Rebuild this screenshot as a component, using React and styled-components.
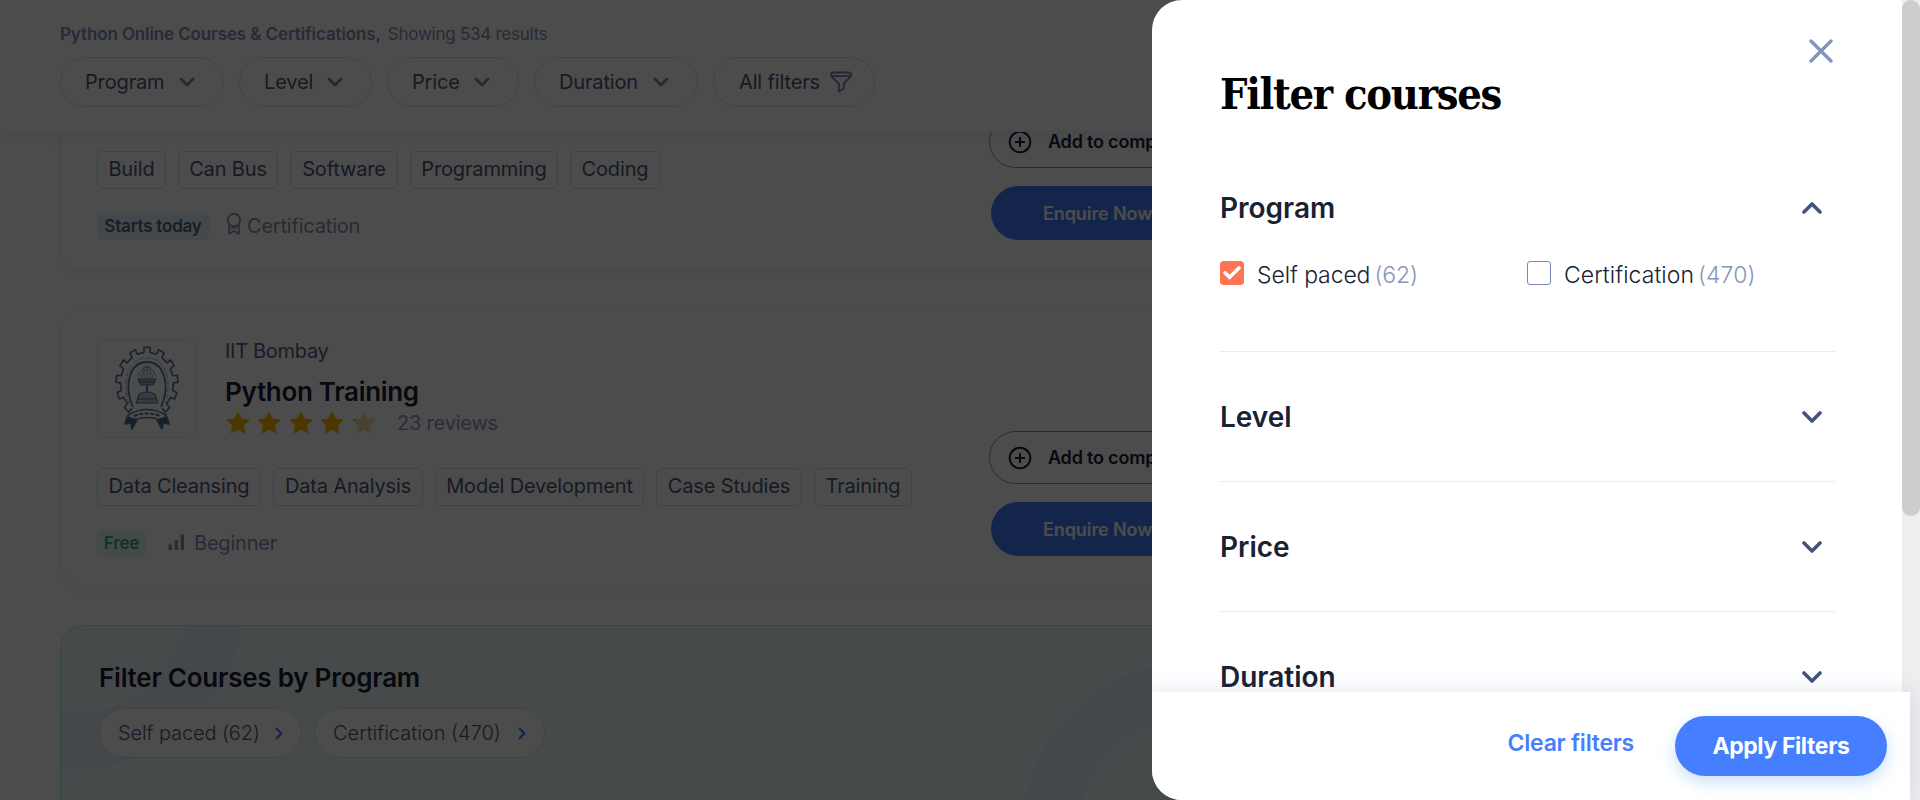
import React from "react";
import styled, { createGlobalStyle, css } from "styled-components";

const Global = createGlobalStyle`
  *, *::before, *::after { box-sizing: border-box; }
  body { margin: 0; background: #fff; overflow: hidden; }
  h1, h2, h3, p { margin: 0; }
  button { font: inherit; background: none; border: 0; padding: 0; cursor: pointer; }
  svg { display: block; flex: none; }
`;

const Screen = styled.div`
  position: relative;
  width: 1920px;
  height: 800px;
  overflow: hidden;
  font-family: Inter, "Liberation Sans", sans-serif;
  color: #516182;
`;

/* ---------- results page ---------- */

const Toolbar = styled.header`
  position: relative;
  z-index: 1;
  height: 132px;
  padding: 24px 60px 0;
  background: #fff;
  border-bottom: 1px solid #f4f6fa;
  box-shadow: 0 6px 14px rgba(70, 100, 170, 0.08);
`;

const Summary = styled.p`
  height: 33px;
  font-size: 17px;
  line-height: 20px;
  color: #8191b4;
  letter-spacing: -0.25px;
  strong {
    margin-right: 7px;
    font-weight: 600;
    letter-spacing: -0.12px;
  }
`;

const PillRow = styled.div`
  display: flex;
  gap: ${(p) => p.$gap};
`;

const Pill = styled.button`
  display: flex;
  align-items: center;
  justify-content: space-between;
  width: ${(p) => p.$width}px;
  height: 50px;
  padding: 0 ${(p) => p.$end}px 0 ${(p) => p.$start}px;
  border: 1px solid #d8e2e8;
  border-radius: 25px;
  background: #fff;
  font-size: 20px;
  font-weight: ${(p) => p.$weight || 400};
  letter-spacing: ${(p) => p.$spacing || "-0.15px"};
  color: #4c5979;
  white-space: nowrap;
`;

const Results = styled.main`
  padding: 0 60px;
`;

const Card = styled.article`
  display: grid;
  grid-template-columns: 892px 1fr;
  height: ${(p) => p.$height}px;
  margin-top: ${(p) => p.$top}px;
  padding: ${(p) => p.$pad}px 36px 0;
  border: 1px solid #e9eef2;
  border-radius: 24px;
  box-shadow: 0 6px 10px rgba(70, 100, 170, 0.05);
`;

const CardMain = styled.div`
  padding-top: ${(p) => p.$top || 0}px;
`;

const CourseHead = styled.div`
  display: flex;
  height: 129px;
`;

const LogoBox = styled.div`
  display: flex;
  align-items: center;
  justify-content: center;
  width: 99px;
  height: 99px;
  margin-right: 29px;
  border: 1px solid #e8ebef;
  border-radius: 9px;
`;

const School = styled.p`
  font-size: 20px;
  line-height: 25px;
  color: #516182;
  letter-spacing: -0.3px;
`;

const CourseTitle = styled.h2`
  margin-top: 12px;
  font-size: 26px;
  font-weight: 600;
  line-height: 32px;
  letter-spacing: -0.3px;
  color: #192133;
`;

const Rating = styled.div`
  display: flex;
  align-items: center;
  height: 28px;
  margin-top: 1px;
  font-size: 20px;
  color: #8c9abb;
`;

const Reviews = styled.span`
  margin-left: 17px;
  font-weight: 400;
  letter-spacing: -0.2px;
`;

const Tags = styled.div`
  display: flex;
  gap: 12px;
`;

const Tag = styled.span`
  width: ${(p) => p.$width}px;
  height: 38px;
  border: 1px solid #d5dce3;
  border-radius: 5px;
  font-size: 20px;
  line-height: 35px;
  letter-spacing: -0.15px;
  text-align: center;
  white-space: nowrap;
  color: #4c5979;
`;

const Meta = styled.div`
  display: flex;
  align-items: center;
  height: 27px;
  margin-top: 24px;
  font-size: 20px;
  font-weight: 400;
  line-height: 26px;
  color: #8191b4;
`;

const Badge = styled.span`
  width: ${(p) => p.$width}px;
  height: 27px;
  margin-right: ${(p) => p.$gap}px;
  border-radius: 5px;
  font-size: 17px;
  font-weight: 600;
  letter-spacing: -0.2px;
  line-height: 26px;
  text-align: center;
  white-space: nowrap;
  ${(p) =>
    p.$green
      ? css`
          color: #1cb687;
          background: #ebf4f4;
        `
      : css`
          color: #516585;
          background: #e6f0f7;
        `}
`;

const MetaText = styled.span`
  height: 27px;
  margin-left: ${(p) => p.$left}px;
  letter-spacing: -0.2px;
`;

const Actions = styled.div`
  display: flex;
  flex-direction: column;
  gap: 18px;
  padding-top: ${(p) => p.$top}px;
`;

const CompareButton = styled.button`
  display: flex;
  align-items: center;
  gap: 16px;
  width: 220px;
  height: 53px;
  padding-left: 18px;
  border: 1px solid #8191b4;
  border-radius: 27px;
  font-size: 18px;
  font-weight: 600;
  letter-spacing: -0.2px;
  color: #192133;
  white-space: nowrap;
`;

const EnquireButton = styled.button`
  width: 216px;
  height: 54px;
  margin-left: 2px;
  padding-left: 52px;
  border-radius: 27px;
  background: #457eff;
  color: #fff;
  font-size: 18px;
  font-weight: 600;
  letter-spacing: -0.1px;
  text-align: left;
`;

const ProgramPanel = styled.section`
  position: relative;
  height: 200px;
  margin-top: 38px;
  padding: 36px 38px;
  border: 1px solid #bde8ee;
  border-radius: 24px;
  background: #ecf9f8;
  overflow: hidden;
`;

const PanelRings = styled.svg`
  position: absolute;
  inset: 0;
`;

const PanelBody = styled.div`
  position: relative;
`;

const PanelTitle = styled.h2`
  height: 46px;
  font-size: 26px;
  font-weight: 600;
  line-height: 32px;
  letter-spacing: -0.23px;
  color: #192133;
`;

const Overlay = styled.div`
  position: absolute;
  z-index: 2;
  inset: 0;
  background: rgba(0, 0, 0, 0.7);
`;

/* ---------- drawer ---------- */

const Drawer = styled.aside`
  position: absolute;
  z-index: 3;
  top: 0;
  right: 0;
  display: flex;
  flex-direction: column;
  width: 768px;
  height: 800px;
  border-radius: 30px 0 0 30px;
  background: #fff;
  overflow: hidden;
`;

const DrawerBody = styled.div`
  display: flex;
  height: 692px;
  flex: none;
`;

const DrawerContent = styled.div`
  width: 750px;
  padding: 0 67px 0 68px;
`;

const DrawerHead = styled.div`
  display: flex;
  justify-content: space-between;
  height: 143px;
  padding-top: 39px;
`;

const DrawerTitle = styled.h1`
  padding-top: 29px;
  font-family: "Roboto Slab", "DejaVu Serif Condensed", "DejaVu Serif", serif;
  font-stretch: condensed;
  font-size: 43px;
  font-weight: 700;
  line-height: 52px;
  letter-spacing: -1.3px;
  color: #000;
  white-space: nowrap;
`;

const Close = styled.button`
  align-self: flex-start;
  margin-right: 2px;
`;

const Group = styled.section`
  height: ${(p) => (p.$open ? 209 : 130)}px;
  border-bottom: 1px solid #e8eef0;
`;

const GroupHead = styled.div`
  display: flex;
  align-items: center;
  justify-content: space-between;
  height: 130px;
  padding-right: 13px;
  h3 {
    font-size: 28px;
    font-weight: 600;
    letter-spacing: 0;
    color: #192133;
  }
`;

const Options = styled.div`
  display: grid;
  grid-template-columns: 307px 1fr;
  margin-top: -12px;
`;

const Option = styled.label`
  display: flex;
  height: 32px;
  font-size: 23px;
  font-weight: 350;
  line-height: 28px;
  letter-spacing: ${(p) => p.$spacing || "-0.1px"};
  color: #192133;
  white-space: nowrap;
`;

const CheckBox = styled.span`
  display: flex;
  align-items: center;
  justify-content: center;
  width: 24px;
  height: 24px;
  margin-right: 13px;
  border: 1px solid ${(p) => (p.$checked ? "#ff7452" : "#7888b4")};
  border-radius: 3px;
  background: ${(p) => (p.$checked ? "#ff7452" : "#fff")};
`;

const Count = styled.span`
  margin-left: 4px;
  color: #8597bd;
`;

const ScrollTrack = styled.div`
  width: 18px;
  height: 800px;
  background: #eeeeee;
`;

const ScrollThumb = styled.div`
  height: 516px;
  border-radius: 9px;
  background: #cdcdcd;
`;

const DrawerFooter = styled.footer`
  position: relative;
  display: flex;
  align-items: flex-start;
  justify-content: flex-end;
  width: 758px;
  height: 108px;
  padding: 24px 23px 0 0;
  background: #fff;
  box-shadow: 0 0 20px rgba(70, 90, 190, 0.16);
`;

const ClearButton = styled.button`
  height: 54px;
  margin-right: 41px;
  color: #457eff;
  font-size: 23px;
  font-weight: 600;
  letter-spacing: -0.25px;
`;

const ApplyButton = styled.button`
  width: 212px;
  height: 60px;
  border-radius: 30px;
  background: #457eff;
  box-shadow: 0 6px 16px rgba(50, 130, 220, 0.26);
  color: #fff;
  font-size: 23px;
  font-weight: 700;
  letter-spacing: -0.4px;
`;

/* ---------- icons ---------- */

const Chevron = ({ w = 16, h = 10, stroke = 2.8, color = "#7686a8", up }) => (
  <svg width={w} height={h} viewBox={`0 0 ${w} ${h}`} fill="none">
    <path
      d={up ? `M2 ${h - 2} L${w / 2} 2 L${w - 2} ${h - 2}` : `M2 2 L${w / 2} ${h - 2} L${w - 2} 2`}
      stroke={color}
      strokeWidth={stroke}
      strokeLinecap="round"
      strokeLinejoin="round"
    />
  </svg>
);

const ChevronRight = () => (
  <svg width="8" height="13" viewBox="0 0 8 13" fill="none" stroke="#457eff" strokeWidth="2.3" strokeLinecap="round">
    <path d="M1.7 1.7 L6.3 6.5 L1.7 11.3" />
  </svg>
);

const Funnel = () => (
  <svg width="22" height="22" viewBox="0 0 22 21" fill="none" stroke="#7686a8" strokeWidth="1.9" strokeLinejoin="round">
    <path d="M3.5 1 H18.5 Q21 1 21 3.2 Q21 4.5 20 5.6 L13.8 12 V17 L8.8 20 V12 L2 5.6 Q1 4.5 1 3.2 Q1 1 3.5 1 Z" />
    <path d="M1.3 4.6 H20.7" />
  </svg>
);

const Ribbon = () => (
  <svg width="16" height="27" viewBox="0 0 16 27" fill="none" stroke="#8191b4" strokeWidth="1.8">
    <circle cx="8" cy="7" r="6.2" />
    <path d="M3.2 11.5 V20.7 L8 18 L12.8 20.7 V11.5 M5 14.5 H11" />
  </svg>
);

const Bars = () => (
  <svg width="17" height="19" viewBox="0 0 17 19" fill="#8191b4">
    <rect x="0.5" y="10.5" width="3.4" height="5.5" />
    <rect x="6.7" y="6" width="3.4" height="10" />
    <rect x="12.6" y="0.5" width="3.4" height="15.5" />
  </svg>
);

const PlusCircle = () => (
  <svg width="24" height="24" viewBox="0 0 24 24" fill="none" stroke="#192133" strokeWidth="2">
    <circle cx="12" cy="12" r="10.3" />
    <path d="M12 7 V17 M7 12 H17" />
  </svg>
);

const STAR = "M12 1 L15.3 7.9 L23 8.9 L17.4 14.2 L18.8 22 L12 18.3 L5.2 22 L6.6 14.2 L1 8.9 L8.7 7.9 Z";

const Stars = () => (
  <svg width="155" height="27" viewBox="0 0 155 27">
    <defs>
      <clipPath id="lastStarFill">
        <rect x="125" y="0" width="5" height="25" />
      </clipPath>
    </defs>
    {[1, 32, 64, 95].map((x) => (
      <path key={x} d={STAR} fill="#ffb800" stroke="#ffb800" strokeLinejoin="round" transform={`translate(${x} 1)`} />
    ))}
    <path d={STAR} fill="#f3dda8" stroke="#f3dda8" strokeLinejoin="round" transform="translate(127 1)" />
    <g clipPath="url(#lastStarFill)">
      <path d={STAR} fill="#ffb800" stroke="#ffb800" strokeLinejoin="round" transform="translate(127 1)" />
    </g>
  </svg>
);

/* cog outline: wide teeth with narrow valleys, open towards the ribbon */
const gearPath = (() => {
  const teeth = 11;
  const from = -Math.PI / 2 - 2.42;
  const step = (2.42 * 2) / (teeth - 1);
  const pts = [];
  for (let i = 0; i < teeth; i++) {
    const a = from + i * step;
    [
      [a - step * 0.24, 26.5],
      [a - step * 0.2, 31],
      [a + step * 0.2, 31],
      [a + step * 0.24, 26.5],
    ].forEach(([t, r]) => pts.push(`${(36 + Math.cos(t) * r).toFixed(1)} ${(40 + Math.sin(t) * r * 1.16).toFixed(1)}`));
  }
  return "M" + pts.join(" L");
})();

const Crest = () => (
  <svg width="72" height="92" viewBox="0 0 72 92" fill="none" stroke="#55739b" strokeWidth="1.6" strokeLinejoin="round">
    <path d={gearPath} />
    <path d="M22 64 C12 42 19 19 36 19 C53 19 60 42 50 64" strokeWidth="1.8" />
    <path d="M18 61 C10 36 18 15 36 15 C54 15 62 36 54 61" strokeWidth="0.8" stroke="#8aa0bd" strokeDasharray="5 2" />
    <path d="M27 33 Q36 15 45 33 M30 34 Q36 18 42 34 M33 35 V23 M36 36 V21 M39 35 V23" strokeWidth="1" stroke="#8aa0bd" />
    <path d="M27 36 H45 L42 42 H30 Z M29 39 H43" fill="#a0b2c9" strokeWidth="1.2" />
    <path d="M36 42 V51" strokeWidth="2" />
    <path d="M28 51 Q36 47 44 51 L47 60 H25 Z M26 56 H46" fill="#bcc8d8" strokeWidth="1" />
    <path d="M17 72 Q36 61 55 72 L53 79 Q36 70 19 79 Z" />
    <path d="M23 73 Q36 68 49 73" strokeWidth="2" strokeDasharray="4 1.5" />
    <path d="M16 74 L14 81 L20 80 L21 86 L26 77 Z M56 74 L58 81 L52 80 L51 86 L46 77 Z" fill="#456898" />
  </svg>
);

/* ---------- content ---------- */

const toolbarFilters = [
  { label: "Program", width: 164 },
  { label: "Level", width: 133 },
  { label: "Price", width: 132 },
  { label: "Duration", width: 164 },
];
const firstTags = [["Build", 69], ["Can Bus", 100], ["Software", 108], ["Programming", 148], ["Coding", 90]];
const secondTags = [
  ["Data Cleansing", 164],
  ["Data Analysis", 150],
  ["Model Development", 209],
  ["Case Studies", 146],
  ["Training", 98],
];

const TagList = ({ items }) => (
  <Tags>
    {items.map(([label, width]) => (
      <Tag key={label} $width={width}>{label}</Tag>
    ))}
  </Tags>
);

const CourseActions = ({ top }) => (
  <Actions $top={top}>
    <CompareButton><PlusCircle />Add to compare</CompareButton>
    <EnquireButton>Enquire Now</EnquireButton>
  </Actions>
);

export default function App() {
  return (
    <Screen>
      <Global />
      <Toolbar>
        <Summary><strong>Python Online Courses &amp; Certifications,</strong>Showing 534 results</Summary>
        <PillRow $gap="15px">
          {toolbarFilters.map((f) => (
            <Pill key={f.label} $width={f.width} $start={24} $end={28}>{f.label}<Chevron /></Pill>
          ))}
          <Pill $width={162} $start={25} $end={22}>All filters<Funnel /></Pill>
        </PillRow>
      </Toolbar>
      <Results>
        <Card $height={210} $top={-71} $pad={53}>
          <CardMain $top={36}>
            <TagList items={firstTags} />
            <Meta>
              <Badge $width={112} $gap={17}>Starts today</Badge>
              <Ribbon />
              <MetaText $left={5}>Certification</MetaText>
            </Meta>
          </CardMain>
          <CourseActions top={0} />
        </Card>
        <Card $height={279} $top={37} $pad={30}>
          <CardMain>
            <CourseHead>
              <LogoBox><Crest /></LogoBox>
              <div>
                <School>IIT Bombay</School>
                <CourseTitle>Python Training</CourseTitle>
                <Rating><Stars /><Reviews>23 reviews</Reviews></Rating>
              </div>
            </CourseHead>
            <TagList items={secondTags} />
            <Meta>
              <Badge $width={49} $gap={22} $green>Free</Badge>
              <Bars />
              <MetaText $left={9}>Beginner</MetaText>
            </Meta>
          </CardMain>
          <CourseActions top={92} />
        </Card>
        <ProgramPanel>
          <PanelRings width="1798" height="200" viewBox="0 0 1798 200" fill="none" stroke="#e3f2fb" strokeWidth="57">
            <circle cx="14" cy="-27" r="141.5" />
            <circle cx="1130" cy="206" r="141.5" />
          </PanelRings>
          <PanelBody>
            <PanelTitle>Filter Courses by Program</PanelTitle>
            <PillRow $gap="12px">
              <Pill $width={203} $start={18} $end={18} $weight={350} $spacing="-0.1px">Self paced (62)<ChevronRight /></Pill>
              <Pill $width={231} $start={18} $end={18} $weight={350} $spacing="0">Certification (470)<ChevronRight /></Pill>
            </PillRow>
          </PanelBody>
        </ProgramPanel>
      </Results>
      <Overlay />
      <Drawer>
        <DrawerBody>
          <DrawerContent>
            <DrawerHead>
              <DrawerTitle>Filter courses</DrawerTitle>
              <Close aria-label="Close">
                <svg width="24" height="24" viewBox="0 0 24 24" stroke="#8494ba" strokeWidth="3.4" strokeLinecap="round">
                  <path d="M2 2 L22 22 M22 2 L2 22" />
                </svg>
              </Close>
            </DrawerHead>
            <Group $open>
              <GroupHead><h3>Program</h3><Chevron up w={20} h={12} stroke={3.6} color="#43547c" /></GroupHead>
              <Options>
                <Option>
                  <CheckBox $checked>
                    <svg width="20" height="16" viewBox="0 0 20 16" fill="none" stroke="#fff" strokeWidth="3.6" strokeLinecap="round">
                      <path d="M3 7.8 L7.6 12.3 L17 3" />
                    </svg>
                  </CheckBox>
                  Self paced<Count>(62)</Count>
                </Option>
                <Option $spacing="0.05px"><CheckBox />Certification<Count>(470)</Count></Option>
              </Options>
            </Group>
            {["Level", "Price", "Duration"].map((name) => (
              <Group key={name}>
                <GroupHead><h3>{name}</h3><Chevron w={20} h={12} stroke={3.6} color="#43547c" /></GroupHead>
              </Group>
            ))}
          </DrawerContent>
          <ScrollTrack><ScrollThumb /></ScrollTrack>
        </DrawerBody>
        <DrawerFooter>
          <ClearButton>Clear filters</ClearButton>
          <ApplyButton>Apply Filters</ApplyButton>
        </DrawerFooter>
      </Drawer>
    </Screen>
  );
}
